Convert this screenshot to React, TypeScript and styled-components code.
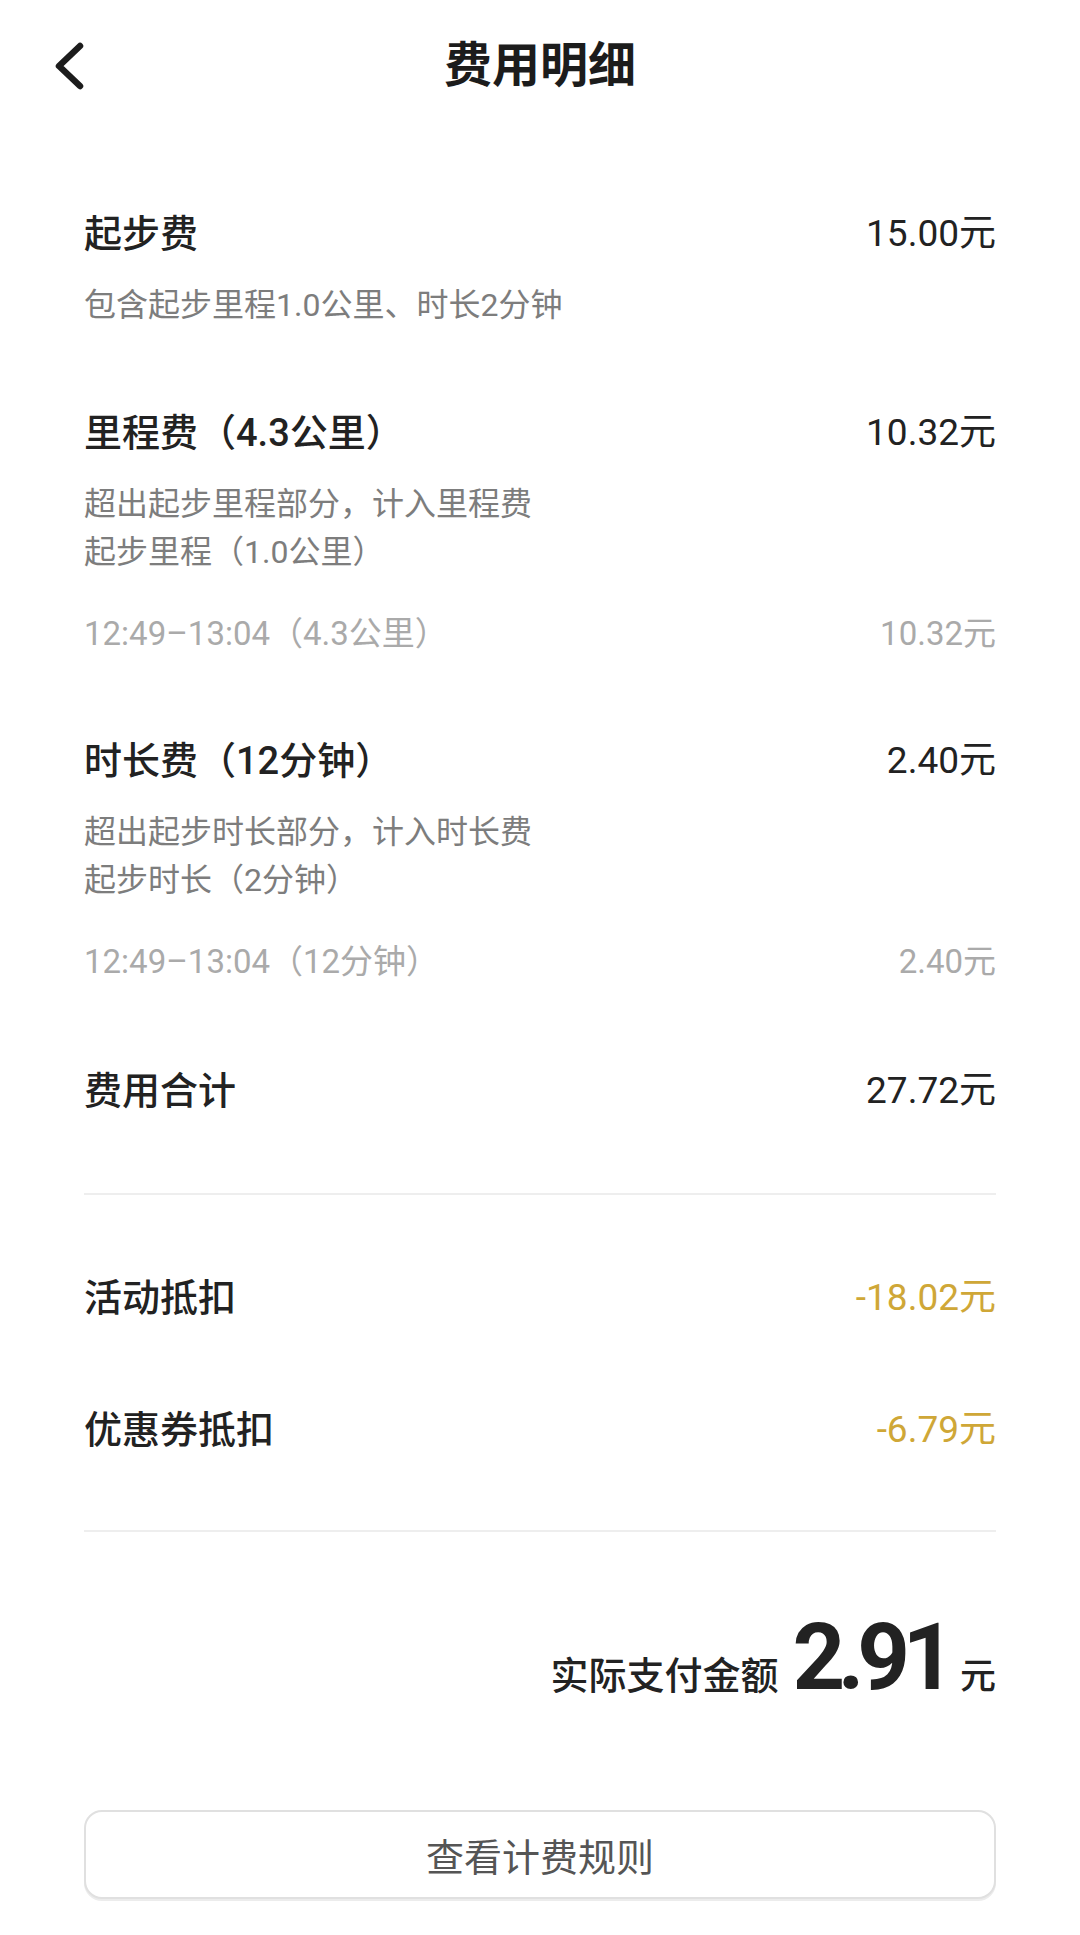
import styled, { createGlobalStyle } from 'styled-components';

const GlobalStyle = createGlobalStyle`
  html, body {
    margin: 0;
    padding: 0;
    background: #ffffff;
  }
  body {
    font-family: Roboto, "Noto Sans CJK SC", sans-serif;
    color: #222222;
    -webkit-font-smoothing: antialiased;
  }
`;

const Page = styled.div`
  width: 1080px;
  min-height: 1935px;
  background: #ffffff;
`;

const Header = styled.header`
  height: 132px;
  display: grid;
  grid-template-columns: 1fr auto 1fr;
  align-items: center;
`;

const BackButton = styled.button`
  justify-self: start;
  margin-left: 50px;
  padding: 0;
  border: none;
  background: none;
  display: flex;
  align-items: center;
  color: #1c1c1c;
`;

const Title = styled.h1`
  margin: 0;
  font-size: 48px;
  font-weight: 700;
  line-height: 1;
  color: #1c1c1c;
`;

const Body = styled.main`
  padding: 0 84px;
  display: flex;
  flex-direction: column;
`;

const FeeItem = styled.section<{ $gap: number }>`
  margin-top: ${({ $gap }) => $gap}px;
  display: flex;
  flex-direction: column;
`;

const MainRow = styled.div`
  display: flex;
  justify-content: space-between;
  align-items: center;
  height: 52px;
`;

const Label = styled.span`
  font-size: 38px;
  font-weight: 500;
  color: #222222;
`;

const Amount = styled.span<{ $tone?: 'gold' }>`
  font-size: 37px;
  font-weight: 400;
  color: ${({ $tone }) => ($tone === 'gold' ? '#cfa737' : '#222222')};
`;

const Notes = styled.div`
  margin-top: 25px;
  font-size: 32px;
  line-height: 48px;
  color: #7d7d7d;
`;

const DetailRow = styled.div`
  margin-top: 31px;
  display: flex;
  justify-content: space-between;
  align-items: center;
  height: 48px;
  font-size: 33px;
  color: #aaaaaa;
`;

const Divider = styled.hr<{ $top: number }>`
  margin: ${({ $top }) => $top}px 0 0;
  border: none;
  height: 2px;
  background: #eeeeee;
`;

const TotalRow = styled.div`
  margin-top: 76px;
  display: flex;
  justify-content: flex-end;
  align-items: baseline;
  color: #222222;
`;

const TotalLabel = styled.span`
  font-size: 38px;
  font-weight: 500;
  line-height: 1;
`;

const TotalValue = styled.span`
  margin-left: 14px;
  font-size: 92px;
  font-weight: 700;
  line-height: 100px;
  letter-spacing: -0.08em;
`;

const TotalUnit = styled.span`
  margin-left: 12px;
  font-size: 36px;
  font-weight: 500;
  line-height: 1;
`;

const RulesButton = styled.button`
  margin-top: 102px;
  height: 89px;
  width: 100%;
  border: 2px solid #e0e0e0;
  border-radius: 18px;
  background: #ffffff;
  box-shadow: 0 2px 0 #ececec;
  font-family: Roboto, "Noto Sans CJK SC", sans-serif;
  font-size: 38px;
  color: #555555;
`;

type Fee = {
  label: string;
  amount: string;
  gap: number;
  notes?: string[];
  detail?: [string, string];
};

const fees: Fee[] = [
  {
    label: '起步费',
    amount: '15.00元',
    gap: 72,
    notes: ['包含起步里程1.0公里、时长2分钟'],
  },
  {
    label: '里程费（4.3公里）',
    amount: '10.32元',
    gap: 74,
    notes: ['超出起步里程部分，计入里程费', '起步里程（1.0公里）'],
    detail: ['12:49–13:04（4.3公里）', '10.32元'],
  },
  {
    label: '时长费（12分钟）',
    amount: '2.40元',
    gap: 76,
    notes: ['超出起步时长部分，计入时长费', '起步时长（2分钟）'],
    detail: ['12:49–13:04（12分钟）', '2.40元'],
  },
  { label: '费用合计', amount: '27.72元', gap: 78 },
];

const discounts = [
  { label: '活动抵扣', amount: '-18.02元', gap: 73 },
  { label: '优惠券抵扣', amount: '-6.79元', gap: 80 },
];

function ChevronLeft() {
  return (
    <svg width="36" height="50" viewBox="0 0 36 50" fill="none">
      <path
        d="M30 5 L9 25 L30 45"
        stroke="currentColor"
        strokeWidth="6.5"
        strokeLinecap="round"
        strokeLinejoin="round"
      />
    </svg>
  );
}

export default function App() {
  return (
    <Page>
      <GlobalStyle />
      <Header>
        <BackButton aria-label="返回">
          <ChevronLeft />
        </BackButton>
        <Title>费用明细</Title>
        <span />
      </Header>

      <Body>
        {fees.map((fee) => (
          <FeeItem key={fee.label} $gap={fee.gap}>
            <MainRow>
              <Label>{fee.label}</Label>
              <Amount>{fee.amount}</Amount>
            </MainRow>
            {fee.notes && (
              <Notes>
                {fee.notes.map((n) => (
                  <div key={n}>{n}</div>
                ))}
              </Notes>
            )}
            {fee.detail && (
              <DetailRow>
                <span>{fee.detail[0]}</span>
                <span>{fee.detail[1]}</span>
              </DetailRow>
            )}
          </FeeItem>
        ))}

        <Divider $top={80} />

        {discounts.map((d) => (
          <FeeItem key={d.label} $gap={d.gap}>
            <MainRow>
              <Label>{d.label}</Label>
              <Amount $tone="gold">{d.amount}</Amount>
            </MainRow>
          </FeeItem>
        ))}

        <Divider $top={78} />

        <TotalRow>
          <TotalLabel>实际支付金额</TotalLabel>
          <TotalValue>2.91</TotalValue>
          <TotalUnit>元</TotalUnit>
        </TotalRow>

        <RulesButton>查看计费规则</RulesButton>
      </Body>
    </Page>
  );
}
